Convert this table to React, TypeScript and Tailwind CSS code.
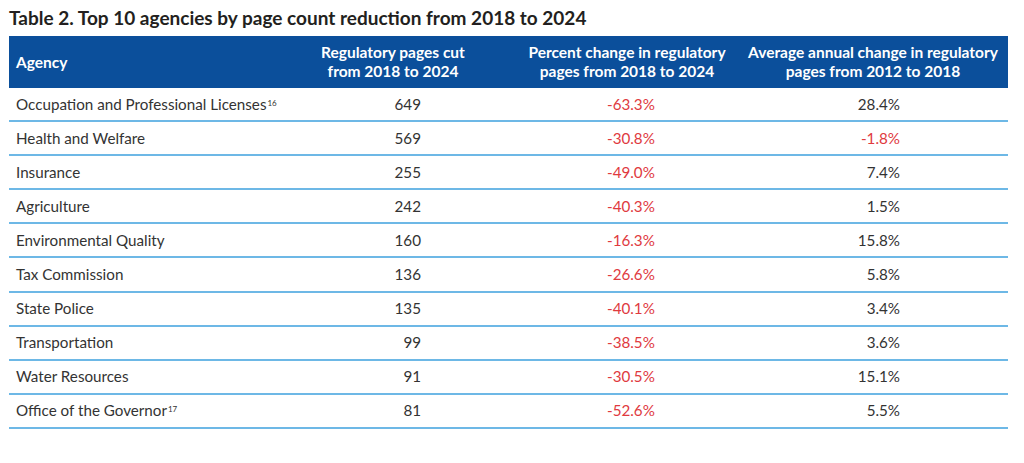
import React from "react";

interface Row {
  agency: string;
  note?: string;
  cut: string;
  pct: string;
  avg: string;
}

const rows: Row[] = [
  { agency: "Occupation and Professional Licenses", note: "16", cut: "649", pct: "-63.3%", avg: "28.4%" },
  { agency: "Health and Welfare", cut: "569", pct: "-30.8%", avg: "-1.8%" },
  { agency: "Insurance", cut: "255", pct: "-49.0%", avg: "7.4%" },
  { agency: "Agriculture", cut: "242", pct: "-40.3%", avg: "1.5%" },
  { agency: "Environmental Quality", cut: "160", pct: "-16.3%", avg: "15.8%" },
  { agency: "Tax Commission", cut: "136", pct: "-26.6%", avg: "5.8%" },
  { agency: "State Police", cut: "135", pct: "-40.1%", avg: "3.4%" },
  { agency: "Transportation", cut: "99", pct: "-38.5%", avg: "3.6%" },
  { agency: "Water Resources", cut: "91", pct: "-30.5%", avg: "15.1%" },
  { agency: "Office of the Governor", note: "17", cut: "81", pct: "-52.6%", avg: "5.5%" },
];

const grid = "grid grid-cols-[261px_246px_222px_270px]";

function valueColor(v: string) {
  return v.startsWith("-") ? "text-[#e03a3e]" : "text-[#333333]";
}

export default function App() {
  return (
    <div className="w-[1024px] h-[463px] bg-white px-[9px] pt-[6px] font-['Lato',sans-serif]">
      <h2 className="text-[19px] leading-[24px] font-bold text-[#231f20] mb-[6px]">
        Table 2. Top 10 agencies by page count reduction from 2018 to 2024
      </h2>

      <div className="w-[999px]">
        <div className={`${grid} h-[52px] bg-[#0b4f9b] text-white text-[15.5px] leading-[19px] font-bold items-center`}>
          <div className="pl-[7px]">Agency</div>
          <div className="text-center">Regulatory pages cut<br />from 2018 to 2024</div>
          <div className="text-center">Percent change in regulatory<br />pages from 2018 to 2024</div>
          <div className="text-center">Average annual change in regulatory<br />pages from 2012 to 2018</div>
        </div>

        {rows.map((r) => (
          <div
            key={r.agency}
            className={`${grid} h-[34.1px] border-b-2 border-[#6db8e6] items-center text-[15.2px] text-[#333333]`}
          >
            <div className="pl-[7px] whitespace-nowrap">
              {r.agency}
              {r.note && <span className="text-[8px] align-[4px] leading-none ml-[1px]">{r.note}</span>}
            </div>
            <div className="text-right pr-[95px]">{r.cut}</div>
            <div className={`pl-[91px] ${valueColor(r.pct)}`}>{r.pct}</div>
            <div className={`text-right pr-[108px] ${valueColor(r.avg)}`}>{r.avg}</div>
          </div>
        ))}
      </div>
    </div>
  );
}
